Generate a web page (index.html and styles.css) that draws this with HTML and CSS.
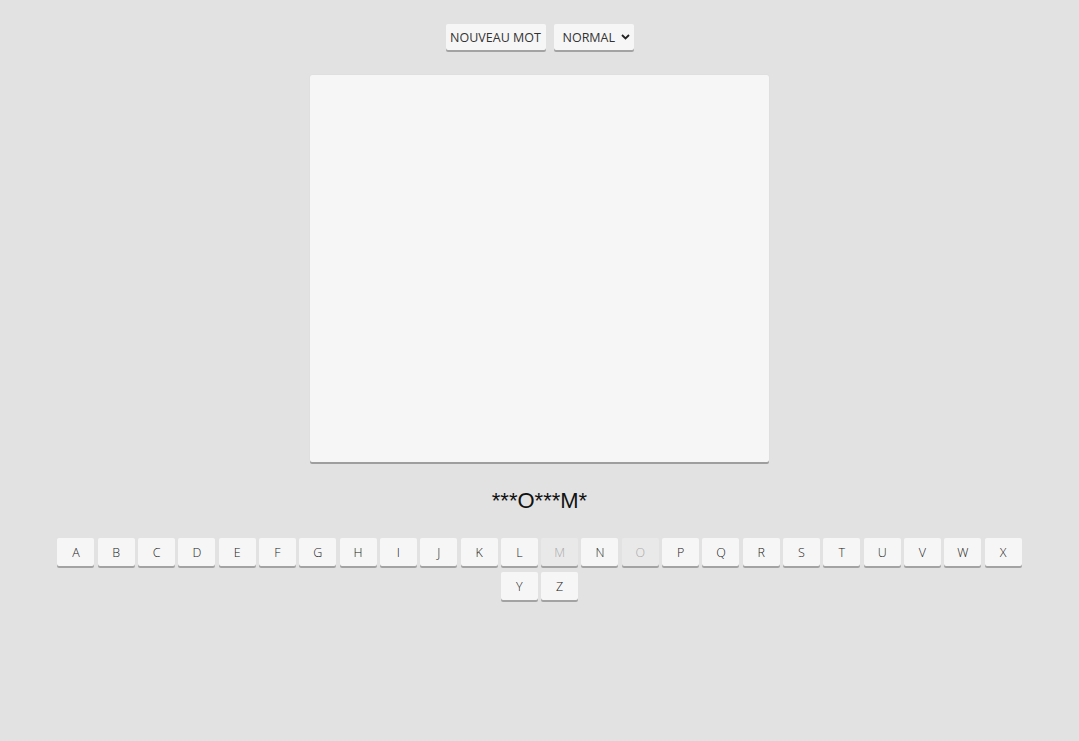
FILE: index.html
```html
<!DOCTYPE html>
<html lang="fr">
<head>
<meta charset="utf-8">
<title>Pendu</title>
<link rel="stylesheet" href="styles.css">
</head>
<body>
<div class="controls">
  <button class="btn">NOUVEAU MOT</button>
  <div class="select">NORMAL <svg width="9" height="6" viewBox="0 0 9 6"><path d="M1 1 L4.5 4.5 L8 1" fill="none" stroke="#222" stroke-width="1.8"/></svg></div>
</div>
<div class="canvas"></div>
<div class="word">***O***M*</div>
<div class="letters">
  <button class="key">A</button><button class="key">B</button><button class="key">C</button><button class="key">D</button><button class="key">E</button><button class="key">F</button><button class="key">G</button><button class="key">H</button><button class="key">I</button><button class="key">J</button><button class="key">K</button><button class="key">L</button><button class="key used">M</button><button class="key">N</button><button class="key used">O</button><button class="key">P</button><button class="key">Q</button><button class="key">R</button><button class="key">S</button><button class="key">T</button><button class="key">U</button><button class="key">V</button><button class="key">W</button><button class="key">X</button><button class="key">Y</button><button class="key">Z</button>
</div>
</body>
</html>
```
FILE: styles.css
```css
html, body {
  margin: 0;
  padding: 0;
  background: #e2e2e2;
  font-family: "Open Sans", "Noto Sans", sans-serif;
}
body {
  padding-top: 24px;
}
.controls {
  display: flex;
  justify-content: center;
  gap: 8px;
  height: 27px;
}
.btn, .select {
  box-sizing: border-box;
  height: 26px;
  background: #f6f6f6;
  border: none;
  border-radius: 2px;
  box-shadow: 0 2px 0 #a3a3a3;
  font-family: "Open Sans", "Noto Sans", sans-serif;
  font-size: 12.5px;
  color: #333;
  display: flex;
  align-items: center;
  padding: 0;
}
.btn {
  width: 100px;
  justify-content: center;
}
.select {
  width: 80px;
  padding-left: 9px;
  gap: 6px;
}
.canvas {
  width: 459px;
  height: 387px;
  margin: 24px auto 0;
  background: #f6f6f6;
  border-radius: 2px;
  box-shadow: 0 2px 0 #9e9e9e, 0 0 1px #c9c9c9;
}
.word {
  text-align: center;
  font-family: "Liberation Sans", Arial, sans-serif;
  font-size: 22px;
  color: #111;
  margin-top: 26px;
  height: 26px;
  line-height: 26px;
}
.letters {
  width: 1000px;
  margin: 24px auto 0;
  display: flex;
  flex-wrap: wrap;
  justify-content: center;
}
.key {
  box-sizing: border-box;
  width: 37px;
  height: 28px;
  margin: 0 1.67px 6px;
  padding: 0;
  background: #f6f6f6;
  border: none;
  border-radius: 2px;
  box-shadow: 0 2px 0 #a3a3a3;
  font-family: "Open Sans", "Noto Sans", sans-serif;
  font-weight: 300;
  font-size: 12.5px;
  color: #222;
}
.key.used {
  background: #e9e9e9;
  color: #aaa;
}
```
